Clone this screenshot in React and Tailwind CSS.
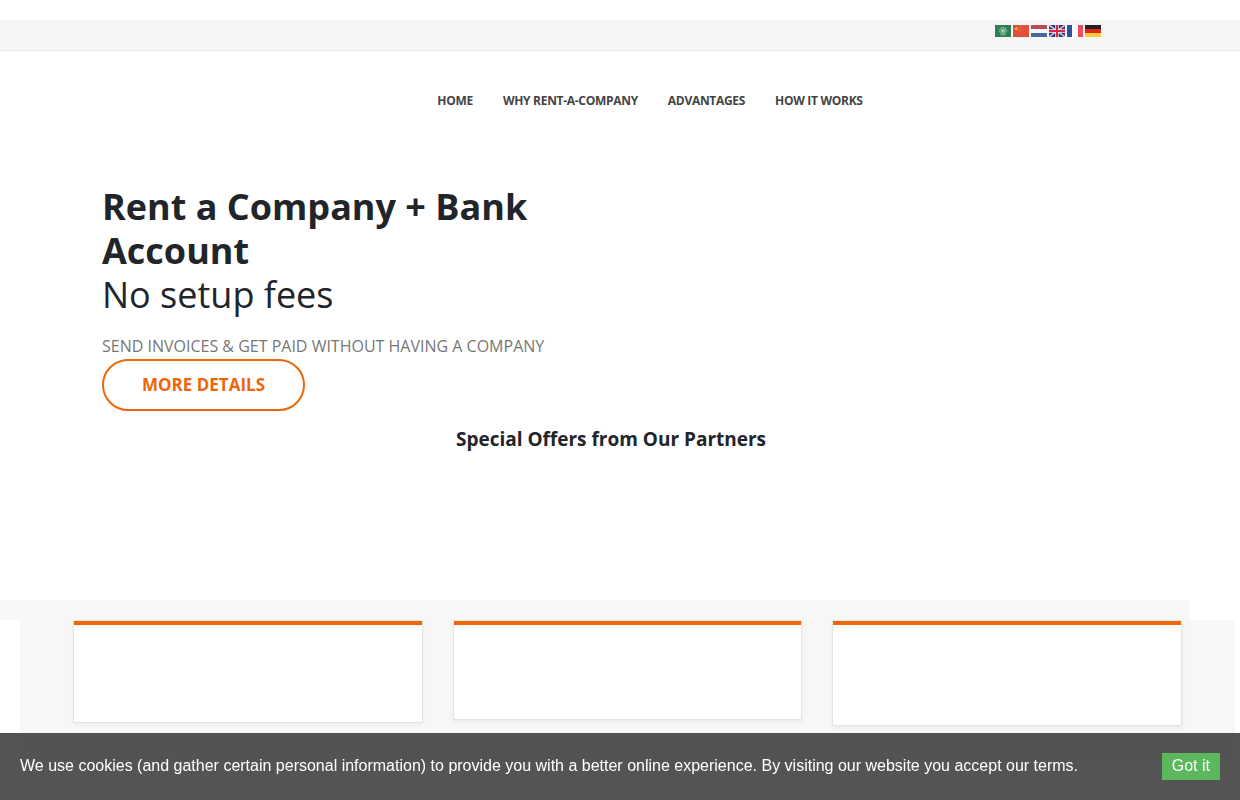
import React from "react";

const navItems = ["Home", "Why Rent-a-Company", "Advantages", "How it works"];

const flags = [
  {
    name: "Arabic",
    art: (
      <>
        <rect width="16" height="12" fill="#2f7f55" />
        <circle cx="8" cy="5.8" r="3.4" fill="#4c9670" stroke="#a9d0ba" strokeWidth="1" strokeDasharray="1.6 0.6" />
        <path d="M6 5.2h4M6.4 6.8h3.2M8 3.8v4" stroke="#c4e0d0" strokeWidth="0.8" />
        <path d="M5.4 10h5.2" stroke="#8abf9f" strokeWidth="0.7" />
      </>
    ),
  },
  {
    name: "Chinese",
    art: (
      <>
        <rect width="16" height="12" fill="#e0503a" />
        <path d="M3.4 1.6l.6 1.4 1.5.1-1.1 1 .4 1.5-1.4-.8-1.3.8.3-1.5-1.1-1 1.5-.1z" fill="#f5b544" />
        <path d="M6.6 1.4h.9M7.6 2.8h.9M7.6 4.4h.9M6.6 5.8h.9" stroke="#f0a03f" strokeWidth="0.8" />
      </>
    ),
  },
  {
    name: "Dutch",
    art: (
      <>
        <rect width="16" height="12" fill="#f8f8f8" />
        <rect width="16" height="4" fill="#b64a55" />
        <rect y="8" width="16" height="4" fill="#4568a0" />
      </>
    ),
  },
  {
    name: "English",
    art: (
      <>
        <rect width="16" height="12" fill="#2b3578" />
        <path d="M0 0l16 12M16 0L0 12" stroke="#e6e0ec" strokeWidth="1.5" />
        <path d="M0 0l16 12M16 0L0 12" stroke="#cf5b6c" strokeWidth="0.4" />
        <path d="M8 0v12M0 6h16" stroke="#f8f4f6" strokeWidth="3.4" />
        <path d="M8 0v12M0 6h16" stroke="#d42a40" strokeWidth="2" />
      </>
    ),
  },
  {
    name: "French",
    art: (
      <>
        <rect width="16" height="12" fill="#fafafa" />
        <rect width="5" height="12" fill="#3252a0" />
        <rect x="11" width="5" height="12" fill="#f04a5c" />
      </>
    ),
  },
  {
    name: "German",
    art: (
      <>
        <rect width="16" height="4" fill="#262222" />
        <rect y="4" width="16" height="4" fill="#e3241d" />
        <rect y="8" width="16" height="4" fill="#fbcb38" />
      </>
    ),
  },
];

function TopBar() {
  return (
    <div className="mt-5 border-b border-[#e7e7e7] bg-[#f6f6f6]">
      <div className="flex h-[30px] justify-end gap-0.5 pt-[5px] pr-[139px]">
        {flags.map((flag) => (
          <a key={flag.name} href="#" aria-label={flag.name} className="block h-3 w-4">
            <svg viewBox="0 0 16 12" className="block h-3 w-4 overflow-hidden" aria-hidden="true">
              {flag.art}
            </svg>
          </a>
        ))}
      </div>
    </div>
  );
}

function Nav() {
  return (
    <nav className="flex justify-center gap-[30px] pt-10 pl-[60px]">
      {navItems.map((item) => (
        <a key={item} href="#" className="text-xs leading-5 font-bold tracking-tight text-[#444444] uppercase">
          {item}
        </a>
      ))}
    </nav>
  );
}

function Hero() {
  return (
    <section className="px-[102px] pt-[74px]">
      <h1 className="max-w-[480px] text-4xl leading-[44px] text-[#212529]">
        <span className="block font-bold">Rent a Company + Bank Account</span>
        <span className="block">No setup fees</span>
      </h1>
      <p className="pt-4 text-base leading-[26px] text-[#777777]">
        SEND INVOICES &amp; GET PAID WITHOUT HAVING A COMPANY
      </p>
      <a
        href="#"
        className="inline-flex h-[52px] items-center rounded-full border-2 border-[#ec660c] px-[38px] text-[17px] font-bold text-[#ec660c]"
      >
        MORE DETAILS
      </a>
    </section>
  );
}

function OfferCard({ className }) {
  return (
    <article className={`border border-[#e4e4e4] bg-white shadow-[0_2px_4px_rgba(0,0,0,0.05)] ${className}`}>
      <div className="h-1 bg-[#ec660c]" />
    </article>
  );
}

function Offers() {
  return (
    <section>
      <h2 className="pt-3.5 pr-[18px] text-center text-[19px] leading-7 font-bold text-[#212529]">
        Special Offers from Our Partners
      </h2>
      <div className="mt-[147px] mr-[50px] h-5 bg-[#f7f7f7]" />
      <div className="mr-[5px] ml-5 grid h-[141px] grid-cols-3 items-start gap-[30px] bg-[#f7f7f7] px-[53px]">
        <OfferCard className="h-[103px]" />
        <OfferCard className="h-[100px]" />
        <OfferCard className="h-[106px]" />
      </div>
    </section>
  );
}

function CookieBar() {
  return (
    <div
      role="region"
      aria-label="Cookie notice"
      className="fixed inset-x-0 bottom-0 flex items-start justify-between bg-[#333333]/84 p-5 font-['Liberation_Sans',Arial,sans-serif] text-base text-white"
    >
      <p className="leading-[25px]">
        We use cookies (and gather certain personal information) to provide you with a better online experience. By
        visiting our website you accept our terms.
      </p>
      <button type="button" className="bg-[#5cb85c] px-2.5 pb-0.5 leading-[25px]">
        Got it
      </button>
    </div>
  );
}

export default function App() {
  return (
    <div className="flow-root bg-white font-['Open_Sans',sans-serif]">
      <TopBar />
      <Nav />
      <Hero />
      <Offers />
      <CookieBar />
    </div>
  );
}
